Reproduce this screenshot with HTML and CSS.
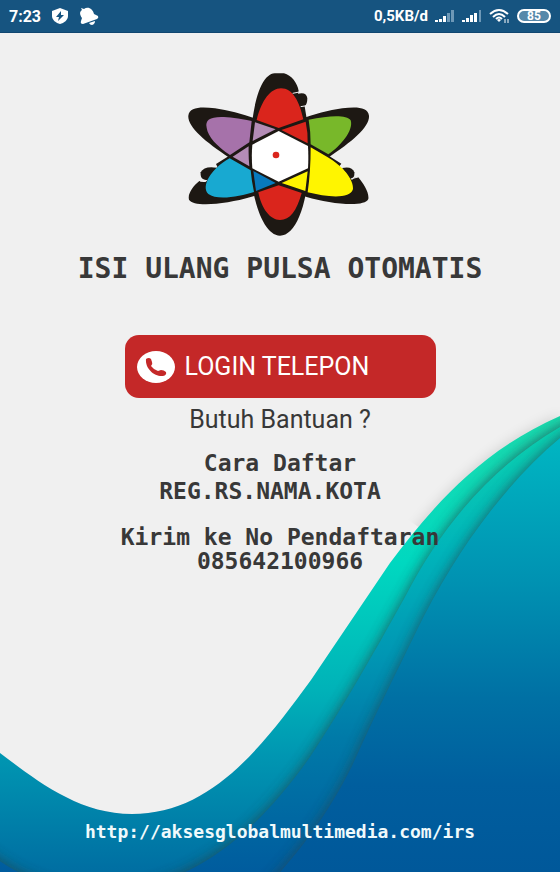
FILE: index.html
```html
<!DOCTYPE html>
<html lang="id">
<head>
<meta charset="utf-8">
<meta name="viewport" content="width=device-width, initial-scale=1">
<title>Isi Ulang Pulsa Otomatis</title>
<link rel="stylesheet" href="styles.css">
</head>
<body>
<div class="screen">
  <svg class="waves" viewBox="0 0 560 872" preserveAspectRatio="none" aria-hidden="true">
    <defs>
      <linearGradient id="outer" gradientUnits="userSpaceOnUse" x1="0" y1="416" x2="0" y2="872">
        <stop offset="0" stop-color="#1cdcae"/><stop offset=".32" stop-color="#00d8c0"/>
        <stop offset=".6" stop-color="#00b2b8"/><stop offset=".74" stop-color="#0097b2"/>
        <stop offset="1" stop-color="#006ea2"/>
      </linearGradient>
      <linearGradient id="middle" gradientUnits="userSpaceOnUse" x1="0" y1="427" x2="0" y2="872">
        <stop offset="0" stop-color="#0cd2b0"/><stop offset=".28" stop-color="#00b4ba"/>
        <stop offset=".5" stop-color="#0098b4"/><stop offset=".7" stop-color="#007aa8"/>
        <stop offset="1" stop-color="#005c9e"/>
      </linearGradient>
      <linearGradient id="inner" gradientUnits="userSpaceOnUse" x1="0" y1="438" x2="0" y2="872">
        <stop offset="0" stop-color="#00b6c2"/><stop offset=".33" stop-color="#0092b2"/>
        <stop offset=".6" stop-color="#0070a4"/><stop offset=".8" stop-color="#005e9e"/>
        <stop offset="1" stop-color="#00589a"/>
      </linearGradient>
      <filter id="soft" x="-20%" y="-20%" width="140%" height="140%"><feGaussianBlur stdDeviation="7"/></filter>
      <path id="edge1" d="M0 753C36 780 78 814 132 814C210 814 260 750 311 680L390 563C430 510 478 452 560 416V900H0Z"/>
      <path id="edge2" d="M-20 846C20 880 60 892 100 892C190 890 255 835 310 757C345 704 370 660 405 597C442 526 490 468 560 427L600 410V920H-20Z"/>
      <path id="edge3" d="M262 892C310 842 335 800 352 766C375 715 395 675 417 630C450 562 500 488 560 438L600 410V920H262Z"/>
      <clipPath id="clip1"><use href="#edge1"/></clipPath>
      <clipPath id="clip2"><use href="#edge2"/></clipPath>
    </defs>
    <use href="#edge1" fill="#000" opacity=".14" filter="url(#soft)"/>
    <path d="M0 700L0 753C36 780 78 814 132 814C210 814 260 750 311 680L390 563L420 528L380 500Z" fill="#f0f0f0"/>
    <use href="#edge1" fill="url(#outer)"/>
    <g clip-path="url(#clip1)"><use href="#edge2" fill="#204a50" opacity=".85" filter="url(#soft)"/></g>
    <use href="#edge2" fill="url(#middle)"/>
    <g clip-path="url(#clip2)"><use href="#edge3" fill="#204a58" opacity=".85" filter="url(#soft)"/></g>
    <use href="#edge3" fill="url(#inner)"/>
  </svg>

  <header class="status">
    <div class="status-group status-left">
      <span class="clock">7:23</span>
      <svg width="16" height="18" viewBox="0 0 16 18" aria-hidden="true"><path fill="#fff" d="M8 1L16 4V9C16 13 12 16 8 17C4 16 0 13 0 9V4Z"/><path fill="#165480" d="M9 4L4 10H7L6 14L12 8H9Z"/></svg>
      <svg width="20" height="20" viewBox="0 0 20 20" aria-hidden="true"><path fill="#fff" d="M2 2L5 3C9 0 14 3 15 8L19 10Q20 12 18 13L4 18Q1 18 2 15L3 12C1 9 0 6 3 4ZM10 17L16 15Q16 18 13 19Q11 19 10 17Z"/></svg>
    </div>
    <div class="status-group status-right">
      <span class="speed">0,5KB/d</span>
      <svg width="20" height="14" viewBox="0 0 20 14" aria-hidden="true"><path fill="#fff" d="M0 11H3V13H0ZM4 10H7V13H4ZM8 7H11V13H8Z"/><path fill="#6d98b7" d="M12 4H15V13H12ZM16 1H19V13H16Z"/></svg>
      <svg width="20" height="14" viewBox="0 0 20 14" aria-hidden="true"><path fill="#fff" d="M0 11H3V13H0ZM4 9H7V13H4ZM8 6H11V13H8ZM12 4H15V13H12Z"/><path fill="#6d98b7" d="M17 1H19V13H17Z"/></svg>
      <svg width="21" height="16" viewBox="0 0 21 16" aria-hidden="true"><g fill="none" stroke="#fff" stroke-width="2"><path d="M1 6Q10 -2 19 6M4 9Q10 3 16 9M7 11Q10 8 13 11"/></g><path fill="#fff" d="M8 12Q10 10 12 12L10 14Z"/><path stroke="#fff" d="M16 11V15M19 11V15"/></svg>
      <span class="battery">85</span>
    </div>
  </header>

  <main class="content">
    <svg class="logo" viewBox="0 0 600 540" role="img" aria-label="Logo">
      <g fill="#1d1813">
        <path d="M210 270C212 130 240 28 284 25H312C334 30 353 55 356 78L354 86Q380 80 382 100Q382 118 374 124C384 180 391 240 388 300C380 430 345 512 300 512C250 512 210 400 210 270Z"/>
        <path d="M25 152C28 125 65 125 105 130C190 142 290 180 385 233L484 296L478 304L516 345Q522 336 534 336C550 355 568 382 565 402C555 428 450 417 380 396C290 367 205 318 148 278C75 230 22 185 25 152Z"/>
        <path d="M567 152C564 125 527 125 487 130C402 142 302 180 210 233L108 297L112 305L78 350Q68 352 58 348C40 362 22 386 27 404C40 428 142 417 212 396C302 367 387 318 444 278C517 230 570 185 567 152Z"/>
        <path d="M110 308Q72 302 62 322C60 340 70 347 84 344Z"/>
        <path d="M486 309Q516 302 523 322C524 336 520 340 510 341Z"/>
      </g>
      <path fill="#a672aa" d="M80 188C72 152 115 148 215 168L208 232L150 270C110 243 84 215 80 188Z"/>
      <path fill="#b48cb6" d="M225 172L287 193L218 228ZM158 275L206 244Q205 275 208 304Z"/>
      <path fill="#da251c" d="M230 165C245 105 272 70 303 70C338 70 358 108 370 163L296 189ZM304 195L377 170Q384 202 383 235ZM296 361L365 384C350 438 330 465 300 465C270 465 244 430 235 382Z"/>
      <path fill="#78b82a" d="M386 164C450 151 500 149 512 166C522 197 480 245 445 268L392 238Q392 200 386 164Z"/>
      <path fill="#fff" d="M296 198L384 243Q386 275 384 310L296 350L217 310Q214 270 217 239Z"/>
      <path fill="#fff500" d="M392 247L442 276C488 302 522 345 519 372C510 404 440 396 383 382Q392 320 392 247ZM383 319L376 378L305 354Z"/>
      <path fill="#18a9d1" d="M149 280L212 316Q215 350 222 381C180 395 110 407 85 387C62 365 92 312 149 280Z"/>
      <path fill="#087abd" d="M220 318L287 354L228 378Z"/>
      <circle cx="288" cy="270" r="10" fill="#da251c"/>
      <path fill="none" stroke="#f0f0f0" stroke-width="3" d="M358 81L338 85M380 122L362 125M60 348L78 347M534 336L515 341"/>
    </svg>
    <h1 class="title">ISI ULANG PULSA OTOMATIS</h1>
    <button class="login" type="button">
      <svg class="phone" viewBox="0 0 38 32" aria-hidden="true"><ellipse cx="19" cy="16" rx="19" ry="16" fill="#fff"/><path fill="#c42828" d="M9 8Q12 6 14 8L15 11Q16 13 14 15Q17 19 21 20L24 19Q27 19 29 21Q30 24 26 25C18 26 8 18 9 8Z"/></svg>
      <span>LOGIN TELEPON</span>
    </button>
    <p class="help">Butuh Bantuan ?</p>
    <section class="steps">
      <p>Cara Daftar</p>
      <p class="format">REG.RS.NAMA.KOTA</p>
    </section>
    <section class="number">
      <p>Kirim ke No Pendaftaran</p>
      <p>085642100966</p>
    </section>
  </main>
  <footer class="footer"><a href="http://aksesglobalmultimedia.com/irs">http://aksesglobalmultimedia.com/irs</a></footer>
</div>
</body>
</html>
```
FILE: styles.css
```css
* { box-sizing: border-box; }
body { margin: 0; background: #f0f0f0; color: #383838; font-family: Roboto, sans-serif; }
p, h1 { margin: 0; }

.screen { position: relative; display: flex; flex-direction: column; min-height: 100vh; overflow: hidden; }
.waves { position: absolute; inset: 0; width: 100%; height: 100%; }

.status {
  position: relative; display: flex; justify-content: space-between; align-items: center;
  height: 33px; padding: 0 9px; background: #165480; border-bottom: 1px solid #104670; color: #fff;
}
.status-group { display: flex; align-items: center; }
.status-left { gap: 11px; }
.status-right { gap: 7px; }
.clock { font-size: 16px; font-weight: 700; }
.speed { font-size: 15px; font-weight: 700; }
.battery {
  width: 34px; height: 14px; border: 2px solid #fff; border-radius: 7px; background: #5688aa;
  font-size: 12px; font-weight: 700; line-height: 10px; text-align: center;
}

.content { position: relative; display: flex; flex-direction: column; align-items: center; padding-top: 32px; text-align: center; }
.logo { width: 200px; height: 180px; }
.title { margin-top: 8px; font: 700 28px/32px "DejaVu Sans Mono", monospace; }
.login {
  display: flex; align-items: center; gap: 10px; width: 55%; min-width: 311px; height: 63px;
  margin-top: 50px; padding: 0 12px; border: 0; border-radius: 14px;
  background: #c42828; color: #fff; font: 400 25px/32px Roboto, sans-serif;
}
.phone { width: 38px; height: 32px; }
.help { margin-top: 8px; font-size: 25px; line-height: 28px; }
.steps, .number { font: 700 23px/28px "DejaVu Sans Mono", monospace; }
.steps { margin-top: 15px; }
.format { padding-right: 20px; }
.number { margin-top: 20px; line-height: 24px; }

.footer { position: relative; margin-top: auto; padding-bottom: 28px; text-align: center; }
.footer a { color: #f0fafc; text-decoration: none; font: 700 18px/24px "DejaVu Sans Mono", monospace; }
```
